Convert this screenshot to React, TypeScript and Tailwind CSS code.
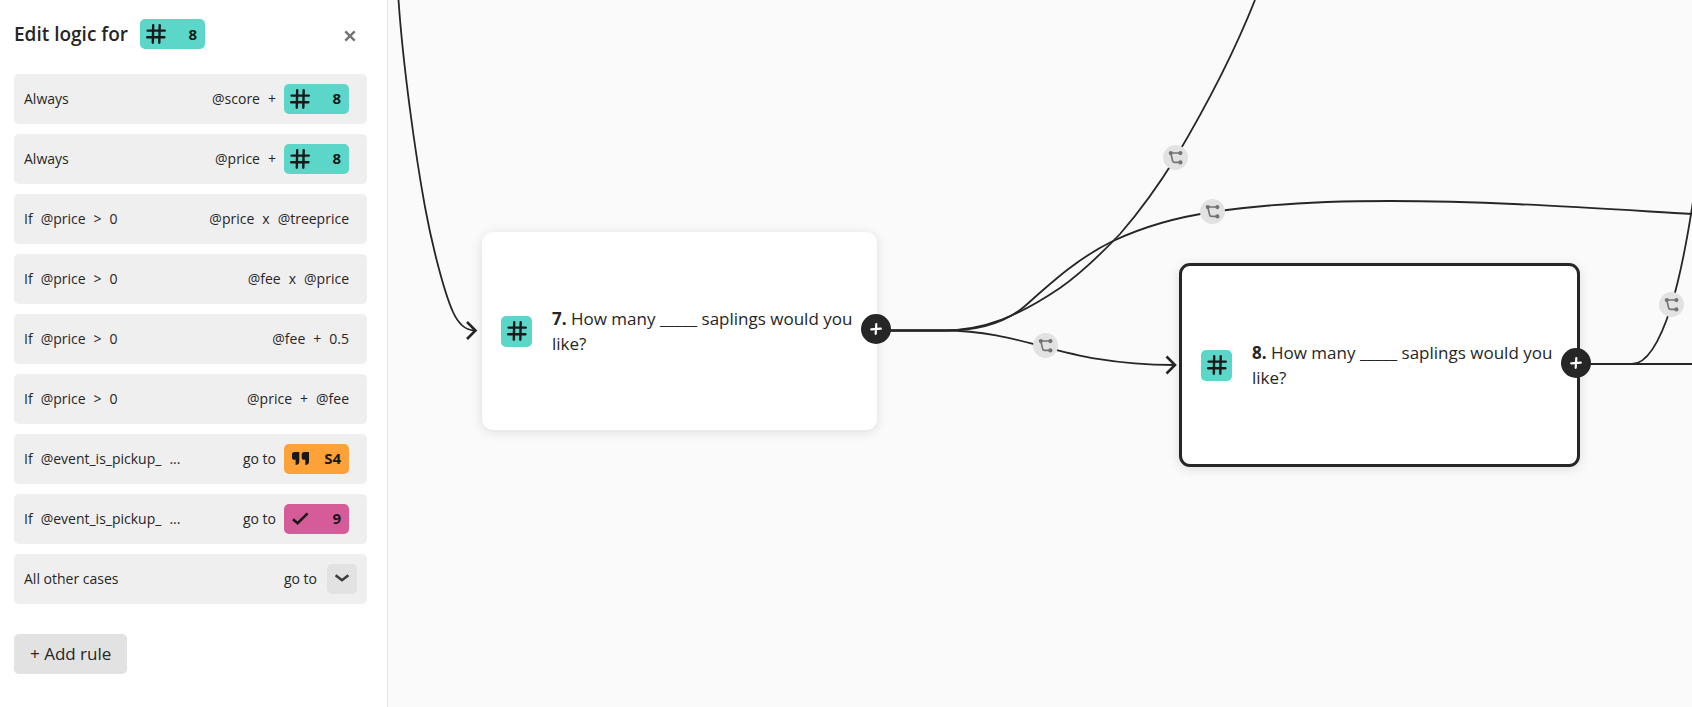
import type { ReactNode } from "react";

type BadgeKind = "number" | "statement" | "yesno";

const BADGE_COLORS: Record<BadgeKind, string> = {
  number: "bg-[#5cd6c8]",
  statement: "bg-[#fca239]",
  yesno: "bg-[#d65c99]",
};

function HashIcon() {
  return (
    <svg width="20" height="20" viewBox="0 0 20 20" fill="none" stroke="#191919" strokeWidth="2.4" strokeLinecap="round" aria-hidden="true">
      <path d="M7.2 1.2 6.8 18.8M13.7 1.2 13.3 18.8M1.6 6.6H18.8M1.2 13.2H18.4" />
    </svg>
  );
}

function QuoteIcon() {
  return (
    <svg width="20" height="20" viewBox="0 0 20 20" fill="#191919" aria-hidden="true">
      <path d="M2 5.600Q2 3 4.600 3H9.300V12.600Q9.300 16 5.600 16V10.800H4.600Q2 10.800 2 8.200Z" />
      <path d="M11.700 5.600Q11.700 3 14.300 3H19V12.600Q19 16 15.300 16V10.800H14.300Q11.700 10.800 11.700 8.200Z" />
    </svg>
  );
}

function CheckIcon() {
  return (
    <svg width="20" height="20" viewBox="0 0 20 20" fill="none" stroke="#191919" strokeWidth="2.6" aria-hidden="true">
      <path d="M3 10.200 7.600 14.200 17.600 4.400" />
    </svg>
  );
}

function Badge({ kind, label }: { kind: BadgeKind; label: string }) {
  return (
    <span className={`flex h-[30px] w-[65px] shrink-0 items-center justify-between rounded-[5px] pl-1.5 pr-2 text-[15px] font-bold text-[#191919] ${BADGE_COLORS[kind]}`}>
      {kind === "number" && <HashIcon />}
      {kind === "statement" && <QuoteIcon />}
      {kind === "yesno" && <CheckIcon />}
      <span>{label}</span>
    </span>
  );
}

type Rule = { when: string[]; then: string[]; badge?: { kind: BadgeKind; label: string } };

const RULES: Rule[] = [
  { when: ["Always"], then: ["@score", "+"], badge: { kind: "number", label: "8" } },
  { when: ["Always"], then: ["@price", "+"], badge: { kind: "number", label: "8" } },
  { when: ["If", "@price", ">", "0"], then: ["@price", "x", "@treeprice"] },
  { when: ["If", "@price", ">", "0"], then: ["@fee", "x", "@price"] },
  { when: ["If", "@price", ">", "0"], then: ["@fee", "+", "0.5"] },
  { when: ["If", "@price", ">", "0"], then: ["@price", "+", "@fee"] },
  { when: ["If", "@event_is_pickup_", "..."], then: ["go to"], badge: { kind: "statement", label: "S4" } },
  { when: ["If", "@event_is_pickup_", "..."], then: ["go to"], badge: { kind: "yesno", label: "9" } },
];

function RuleRow({ rule }: { rule: Rule }) {
  return (
    <li className="flex h-[50px] items-center justify-between rounded-[5px] bg-[#efefef] pl-2.5 pr-[18px]">
      <span className="flex gap-2">
        {rule.when.map((part) => (
          <span key={part}>{part}</span>
        ))}
      </span>
      <span className="flex items-center gap-2">
        {rule.then.map((part) => (
          <span key={part}>{part}</span>
        ))}
        {rule.badge && <Badge kind={rule.badge.kind} label={rule.badge.label} />}
      </span>
    </li>
  );
}

function Sidebar() {
  return (
    <aside className="w-[388px] shrink-0 border-r border-[#e6e6e6] bg-white pl-3.5 pr-5 pt-[19px]">
      <header className="flex items-center justify-between pr-1">
        <h1 className="flex items-center gap-3 text-[19px] font-semibold">
          Edit logic for <Badge kind="number" label="8" />
        </h1>
        <button type="button" aria-label="Close" className="flex size-[26px] items-center justify-center self-end">
          <svg width="12" height="12" viewBox="0 0 12 12" fill="none" stroke="#737373" strokeWidth="2.4" aria-hidden="true">
            <path d="M1.300 1.300 10.700 10.700M10.700 1.300 1.300 10.700" />
          </svg>
        </button>
      </header>

      <ul className="mt-[25px] flex flex-col gap-2.5 text-sm">
        {RULES.map((rule, i) => (
          <RuleRow key={i} rule={rule} />
        ))}
        <li className="flex h-[50px] items-center justify-between rounded-[5px] bg-[#efefef] px-2.5">
          <span>All other cases</span>
          <span className="flex items-center gap-2.5">
            go to
            <button type="button" aria-label="Choose destination" className="flex size-[30px] items-center justify-center rounded-[5px] bg-[#e2e2e2]">
              <svg width="16" height="10" viewBox="0 0 16 10" fill="none" stroke="#3c3c3c" strokeWidth="2.600" aria-hidden="true">
                <path d="M1.600 1.200 8 6.200 14.400 1.200" />
              </svg>
            </button>
          </span>
        </li>
      </ul>

      <button type="button" className="mt-[30px] h-10 rounded-[5px] bg-[#e2e2e2] px-4 text-[17px]">
        + Add rule
      </button>
    </aside>
  );
}

function BranchMarker({ className }: { className: string }) {
  return (
    <button type="button" aria-label="Edit branch" className={`absolute flex size-[25px] items-center justify-center rounded-full bg-[#e2e2e2] ${className}`}>
      <svg width="25" height="25" viewBox="-12.5 -12.5 25 25" fill="none" stroke="#737373" strokeWidth="1.6" aria-hidden="true">
        <path d="M5-4.500H-4.700L-2.900 3.200Q-2.500 4.900-1 4.900H5" />
        <g fill="#737373" stroke="none">
          <circle cx="-4.700" cy="-4.400" r="2.100" />
          <circle cx="4.900" cy="-4.400" r="2.100" />
          <circle cx="4.900" cy="4.900" r="2.100" />
        </g>
      </svg>
    </button>
  );
}

function QuestionNode({ number, className, children }: { number: string; className: string; children: ReactNode }) {
  return (
    <article className={`absolute flex items-center rounded-[11px] bg-white pl-[19px] pr-6 ${className}`}>
      <span className="flex size-[31px] shrink-0 items-center justify-center rounded-[5px] bg-[#5cd6c8]">
        <HashIcon />
      </span>
      <p className="ml-5 text-[17px] leading-[25px]">
        <b>{number}.</b> {children}
      </p>
      <button type="button" aria-label="Add" className="absolute left-[379px] top-[82px] flex size-[30px] items-center justify-center rounded-full bg-[#262627]">
        <svg width="12" height="12" viewBox="0 0 12 12" fill="none" stroke="#fff" strokeWidth="2.2" strokeLinecap="round" aria-hidden="true">
          <path d="M6.300 1.200 5.700 10.800M1.200 6.300 10.800 5.700" />
        </svg>
      </button>
    </article>
  );
}

function Connectors() {
  return (
    <svg className="absolute inset-0 size-full" fill="none" stroke="#262627" strokeWidth="1.800" aria-hidden="true">
      <g transform="translate(-388 0)">
        <path d="M398.500 0C403 65 415 152 425 207C432 245 444 292 453 312C458 323 464 330 474 330.500" />
        <path d="M885 330.500H943C1030 331 1060 365 1174 365" />
        <path d="M885 330.500H940C985 331 1020 315 1060 288C1080 274 1100 255 1120 234C1140 211 1160 183 1176 157C1204 110 1232 58 1255 0" />
        <path d="M885 330.500H943C975 331 1003 325 1025 306C1052 282 1078 258 1113 241C1145 226 1178 217 1213 212C1265 204 1330 201 1390 201C1490 201 1590 208 1692 214" />
        <path d="M1585 364H1632C1650 364 1663 332 1671 307C1680 277 1687 240 1692 208L1696 180" />
        <path d="M1585 364H2400" strokeWidth="2" />
        <path d="M467 322 475.500 330.500 467 339M1166.500 356.500 1175 365 1166.500 373.500" strokeWidth="2.600" />
      </g>
    </svg>
  );
}

function Canvas() {
  return (
    <main className="relative flex-1 overflow-hidden bg-[#fafafa]">
      <Connectors />
      <QuestionNode number="7" className="left-[94px] top-[232px] h-[198px] w-[395px] shadow-[0_2px_12px_rgba(0,0,0,0.12)]">
        How many _____ saplings would you like?
      </QuestionNode>
      <QuestionNode number="8" className="left-[791px] top-[263px] h-[204px] w-[401px] border-3 border-[#262627] shadow-[0_2px_12px_rgba(0,0,0,0.12)]">
        How many _____ saplings would you like?
      </QuestionNode>
      <BranchMarker className="left-[775px] top-[145px]" />
      <BranchMarker className="left-[812px] top-[199px]" />
      <BranchMarker className="left-[645px] top-[333px]" />
      <BranchMarker className="left-[1271px] top-[292px]" />
    </main>
  );
}

export default function App() {
  return (
    <div className="flex min-h-screen font-['Open_Sans','Noto_Sans',sans-serif] text-[#262627]">
      <Sidebar />
      <Canvas />
    </div>
  );
}
